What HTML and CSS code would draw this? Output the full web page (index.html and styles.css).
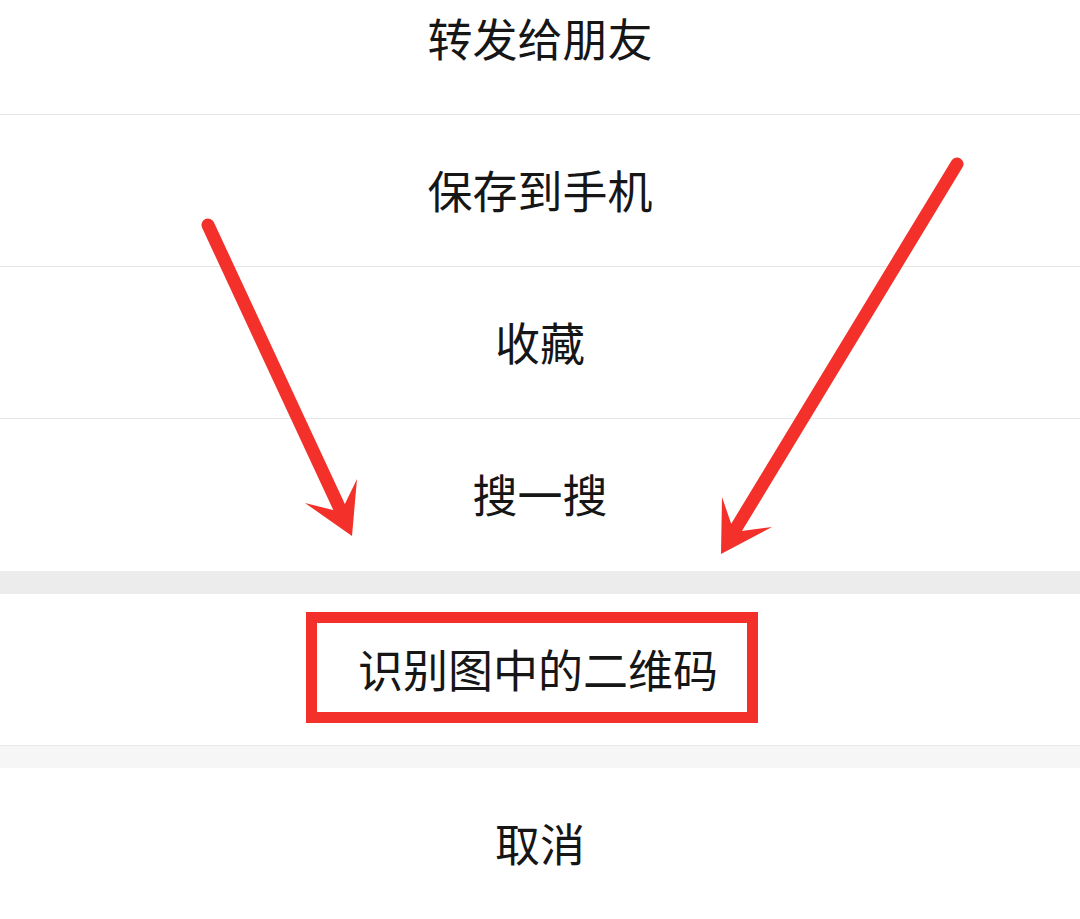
FILE: index.html
```html
<!DOCTYPE html>
<html lang="zh-CN">
<head>
<meta charset="utf-8">
<title>操作菜单</title>
<link rel="stylesheet" href="styles.css">
</head>
<body>
<div class="sheet">
  <div class="group">
    <div class="item item-first">转发给朋友</div>
    <div class="item">保存到手机</div>
    <div class="item">收藏</div>
    <div class="item item-last">搜一搜</div>
  </div>
  <div class="band band-dark"></div>
  <div class="group">
    <div class="item item-qr">
      <span class="label-qr">识别图中的二维码</span>
      <div class="highlight"></div>
    </div>
  </div>
  <div class="band band-light"></div>
  <div class="group">
    <div class="item item-last">取消</div>
  </div>

  <svg class="arrows" width="1080" height="919" viewBox="0 0 1080 919" aria-hidden="true">
    <line x1="208" y1="225" x2="340" y2="509" stroke="#f4302a" stroke-width="13" stroke-linecap="round"/>
    <polygon points="352,536 305,503 341,512 357,479" fill="#f4302a"/>
    <line x1="957" y1="164" x2="735" y2="530" stroke="#f4302a" stroke-width="13" stroke-linecap="round"/>
    <polygon points="721,554 722,497 734,532 772,527" fill="#f4302a"/>
  </svg>
</div>
</body>
</html>
```
FILE: styles.css
```css
html, body {
  margin: 0;
  padding: 0;
  background: #ffffff;
}

body {
  width: 1080px;
  height: 919px;
  overflow: hidden;
  font-family: "Noto Sans CJK SC", "Noto Sans", sans-serif;
}

.sheet {
  position: relative;
  width: 1080px;
  height: 919px;
  overflow: hidden;
  display: flex;
  flex-direction: column;
}

.group {
  display: flex;
  flex-direction: column;
  background: #ffffff;
}

.item {
  box-sizing: border-box;
  height: 152px;
  flex: 0 0 152px;
  padding-bottom: 3px;
  display: flex;
  align-items: center;
  justify-content: center;
  font-size: 45px;
  line-height: 1;
  color: #161616;
  border-bottom: 1px solid #e6e6e6;
}

.item-first {
  margin-top: -37px;
}

.item-last {
  border-bottom: none;
}

.item-qr {
  position: relative;
  border-bottom: 1px solid #e8e8e8;
}

.label-qr {
  display: block;
  padding-right: 4px;
}

.highlight {
  position: absolute;
  left: 306px;
  top: 18px;
  width: 452px;
  height: 111px;
  box-sizing: border-box;
  border: 11px solid #f4302a;
}

.band {
  flex: 0 0 auto;
}

.band-dark {
  height: 23px;
  background: #ececec;
}

.band-light {
  height: 22px;
  background: #f6f6f6;
}

.arrows {
  position: absolute;
  left: 0;
  top: 0;
  pointer-events: none;
}
```
